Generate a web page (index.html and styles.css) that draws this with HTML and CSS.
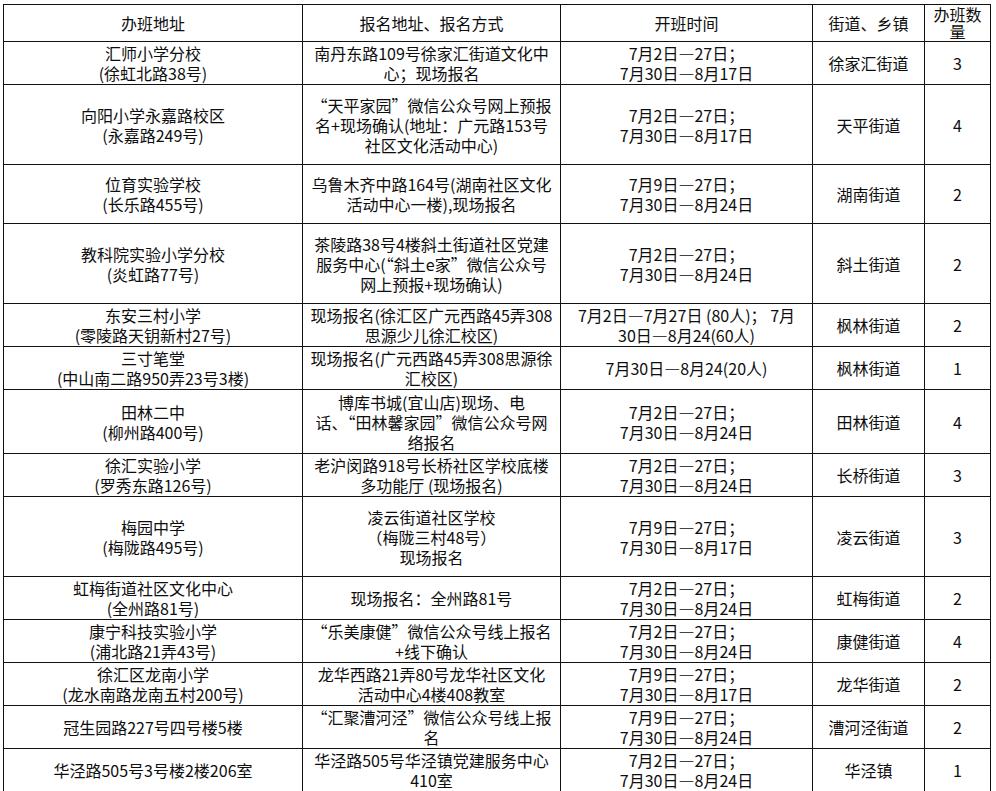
FILE: index.html
```html
<!DOCTYPE html>
<html lang="zh-CN">
<head>
<meta charset="utf-8">
<title>暑期班</title>
<link rel="stylesheet" href="styles.css">
</head>
<body>
<table class="grid">
  <colgroup>
    <col class="c-addr">
    <col class="c-sign">
    <col class="c-time">
    <col class="c-street">
    <col class="c-num">
  </colgroup>
  <thead>
    <tr class="h37">
      <th>办班地址</th>
      <th>报名地址、报名方式</th>
      <th>开班时间</th>
      <th>街道、乡镇</th>
      <th class="tight">办班数<br>量</th>
    </tr>
  </thead>
  <tbody>
    <tr class="h43">
      <td>汇师小学分校<br>(徐虹北路38号)</td>
      <td>南丹东路109号徐家汇街道文化中<br>心；现场报名</td>
      <td>7月2日—27日；<br>7月30日—8月17日</td>
      <td>徐家汇街道</td>
      <td>3</td>
    </tr>
    <tr class="h80">
      <td>向阳小学永嘉路校区<br>(永嘉路249号)</td>
      <td>“天平家园”微信公众号网上预报<br>名+现场确认(地址：广元路153号<br>社区文化活动中心)</td>
      <td>7月2日—27日；<br>7月30日—8月17日</td>
      <td>天平街道</td>
      <td>4</td>
    </tr>
    <tr class="h60">
      <td>位育实验学校<br>(长乐路455号)</td>
      <td>乌鲁木齐中路164号(湖南社区文化<br>活动中心一楼),现场报名</td>
      <td>7月9日—27日；<br>7月30日—8月24日</td>
      <td>湖南街道</td>
      <td>2</td>
    </tr>
    <tr class="h80">
      <td>教科院实验小学分校<br>(炎虹路77号)</td>
      <td>茶陵路38号4楼斜土街道社区党建<br>服务中心(“斜土e家”微信公众号<br>网上预报+现场确认)</td>
      <td>7月2日—27日；<br>7月30日—8月24日</td>
      <td>斜土街道</td>
      <td>2</td>
    </tr>
    <tr class="h43">
      <td>东安三村小学<br>(零陵路天钥新村27号)</td>
      <td>现场报名(徐汇区广元西路45弄308<br>思源少儿徐汇校区)</td>
      <td>7月2日—7月27日 (80人)； 7月<br>30日—8月24(60人)</td>
      <td>枫林街道</td>
      <td>2</td>
    </tr>
    <tr class="h43">
      <td>三寸笔堂<br>(中山南二路950弄23号3楼)</td>
      <td>现场报名(广元西路45弄308思源徐<br>汇校区)</td>
      <td>7月30日—8月24(20人)</td>
      <td>枫林街道</td>
      <td>1</td>
    </tr>
    <tr class="h64">
      <td>田林二中<br>(柳州路400号)</td>
      <td>博库书城(宜山店)现场、电<br>话、“田林馨家园”微信公众号网<br>络报名</td>
      <td>7月2日—27日；<br>7月30日—8月24日</td>
      <td>田林街道</td>
      <td>4</td>
    </tr>
    <tr class="h43">
      <td>徐汇实验小学<br>(罗秀东路126号)</td>
      <td>老沪闵路918号长桥社区学校底楼<br>多功能厅 (现场报名)</td>
      <td>7月2日—27日；<br>7月30日—8月24日</td>
      <td>长桥街道</td>
      <td>3</td>
    </tr>
    <tr class="h80">
      <td>梅园中学<br>(梅陇路495号)</td>
      <td>凌云街道社区学校<br>（梅陇三村48号）<br>现场报名</td>
      <td>7月9日—27日；<br>7月30日—8月17日</td>
      <td>凌云街道</td>
      <td>3</td>
    </tr>
    <tr class="h43">
      <td>虹梅街道社区文化中心<br>(全州路81号)</td>
      <td>现场报名：全州路81号</td>
      <td>7月2日—27日；<br>7月30日—8月24日</td>
      <td>虹梅街道</td>
      <td>2</td>
    </tr>
    <tr class="h43">
      <td>康宁科技实验小学<br>(浦北路21弄43号)</td>
      <td>“乐美康健”微信公众号线上报名<br>+线下确认</td>
      <td>7月2日—27日；<br>7月30日—8月24日</td>
      <td>康健街道</td>
      <td>4</td>
    </tr>
    <tr class="h43">
      <td>徐汇区龙南小学<br>(龙水南路龙南五村200号)</td>
      <td>龙华西路21弄80号龙华社区文化<br>活动中心4楼408教室</td>
      <td>7月9日—27日；<br>7月30日—8月17日</td>
      <td>龙华街道</td>
      <td>2</td>
    </tr>
    <tr class="h43">
      <td>冠生园路227号四号楼5楼</td>
      <td>“汇聚漕河泾”微信公众号线上报<br>名</td>
      <td>7月9日—27日；<br>7月30日—8月24日</td>
      <td>漕河泾街道</td>
      <td>2</td>
    </tr>
    <tr class="h43">
      <td>华泾路505号3号楼2楼206室</td>
      <td>华泾路505号华泾镇党建服务中心<br>410室</td>
      <td>7月2日—27日；<br>7月30日—8月24日</td>
      <td>华泾镇</td>
      <td>1</td>
    </tr>
  </tbody>
</table>
</body>
</html>
```
FILE: styles.css
```css
html, body {
  margin: 0;
  padding: 0;
  background: #ffffff;
}

body {
  font-family: "Noto Sans CJK SC", "Microsoft YaHei", "Noto Sans", sans-serif;
  color: #0d0d0d;
  font-size: 16px;
  line-height: 20px;
}

.grid {
  margin: 4px 0 0 3px;
  width: 987px;
  border-collapse: collapse;
  table-layout: fixed;
}

.c-addr { width: 299px; }
.c-sign { width: 258px; }
.c-time { width: 252px; }
.c-street { width: 112px; }
.c-num { width: 66px; }

.grid th,
.grid td {
  border: 1px solid #111111;
  padding: 0;
  text-align: center;
  vertical-align: middle;
  white-space: nowrap;
  font-weight: normal;
}

.grid th.tight {
  line-height: 17px;
}

.h37 th { height: 36px; }
.h43 td { height: 42px; }
.h60 td { height: 58px; }
.h64 td { height: 63px; }
.h80 td { height: 79px; }
```
